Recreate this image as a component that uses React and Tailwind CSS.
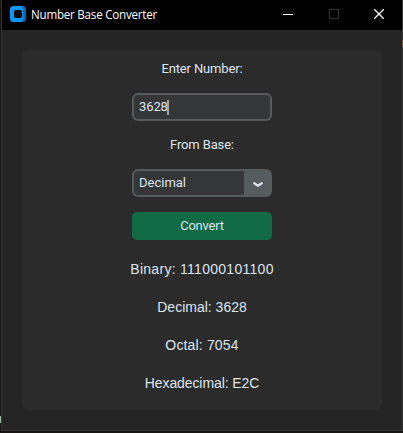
const results = [
  ['Binary', '111000101100', 'tracking-[0.28px]'],
  ['Decimal', '3628', 'tracking-normal'],
  ['Octal', '7054', 'tracking-[0.15px]'],
  ['Hexadecimal', 'E2C', 'tracking-[-0.1px]'],
];

function TitleBar() {
  return (
    <header className="flex h-[30px] items-center bg-black text-white">
      <svg className="ml-2 mt-[-2px]" width="16" height="16" viewBox="0 0 16 16">
        <rect x="4" y="0" width="12" height="16" rx="3.5" fill="#0067b5" />
        <rect x="0" y="0" width="13" height="16" rx="3.5" fill="#0c98fb" />
        <rect x="4" y="4" width="8" height="8" rx="2" fill="#000" />
      </svg>
      <h1 className="ml-[5px] flex-1 whitespace-nowrap font-['Open_Sans',sans-serif] text-[12px] leading-[30px] tracking-[-0.02em]">
        <svg className="inline-block h-[30px] w-[130px] overflow-visible align-top">
          <text x="0" y="19" textLength="126" lengthAdjust="spacingAndGlyphs" fill="white">Number Base Converter</text>
        </svg>
      </h1>
      <div className="flex">
        <span className="flex h-[30px] w-[46px] items-center justify-center">
          <svg className="-mt-px" width="10" height="10" shapeRendering="crispEdges"><path d="M0 4.5h10" stroke="#fff" /></svg>
        </span>
        <span className="flex h-[30px] w-[45px] items-center justify-center">
          <svg className="-mt-[2px]" width="10" height="10" shapeRendering="crispEdges"><path d="M.5.5h9v9h-9z" fill="none" stroke="#333" /></svg>
        </span>
        <span className="flex h-[30px] w-[46px] items-center justify-center">
          <svg className="-mt-[2px]" width="10" height="10"><path d="M.3.3l9.4 9.4M9.7.3L.3 9.7" stroke="#fff" strokeWidth="1.3" /></svg>
        </span>
      </div>
    </header>
  );
}

export default function App() {
  return (
    <div className="relative h-[433px] w-[403px] overflow-hidden bg-[#181414] pl-px">
      <div className="h-[431px] border-x border-b border-[#353535] bg-[#242424]">
        <TitleBar />
        <main className="mx-5 mt-5 flex h-[360px] flex-col items-center rounded-[6px] bg-[#2b2b2b] pt-[5px] font-[Roboto,sans-serif] text-[13px] text-[#dce4ee]">
          <label className="h-7 leading-7 tracking-[-0.15px]">Enter Number:</label>
          <div className="mt-[10px] flex h-7 w-[140px] items-center rounded-[6px] border-2 border-[#565b5e] bg-[#343638] pl-[5px]">
            <span className="tracking-[-0.1px]">3628</span>
            <span className="-ml-px h-[15px] w-[2px] bg-[#a3a7ac]" />
          </div>
          <label className="mt-[10px] h-7 leading-7 tracking-[-0.15px]">From Base:</label>
          <div className="mt-[10px] flex h-7 w-[140px] items-stretch rounded-[6px] border-2 border-[#565b5e] bg-[#343638]">
            <span className="flex-1 pl-[5px] leading-6">Decimal</span>
            <span className="flex w-[26px] items-center justify-center bg-[#565b5e] pl-[2px] pt-[3px]">
              <svg width="10" height="6" viewBox="0 0 10 6" fill="none" stroke="#dce4ee" strokeWidth="2.3" strokeLinecap="round" strokeLinejoin="round">
                <path d="M1.3 1.3L5 3.7L8.7 1.3" />
              </svg>
            </span>
          </div>
          <button className="mt-[15px] h-7 w-[140px] shrink-0 rounded-[5px] bg-[#106a43] leading-7 tracking-[-0.2px]">Convert</button>
          <div className="mt-[15px] flex flex-col items-center gap-[10px] font-['Liberation_Sans',Arial,sans-serif] text-[14px]">
            {results.map(([name, value, tracking]) => (
              <p key={name} className={`h-7 whitespace-nowrap text-center leading-7 ${tracking}`}>{name}: {value}</p>
            ))}
          </div>
        </main>
      </div>
      {/* Slivers of the desktop behind the window */}
      <i className="absolute left-0 top-[416px] h-[7px] w-px bg-[#9fb5a4]" />
      <i className="absolute right-0 top-[40px] h-[7px] w-px bg-[#6e5340]" />
    </div>
  );
}
